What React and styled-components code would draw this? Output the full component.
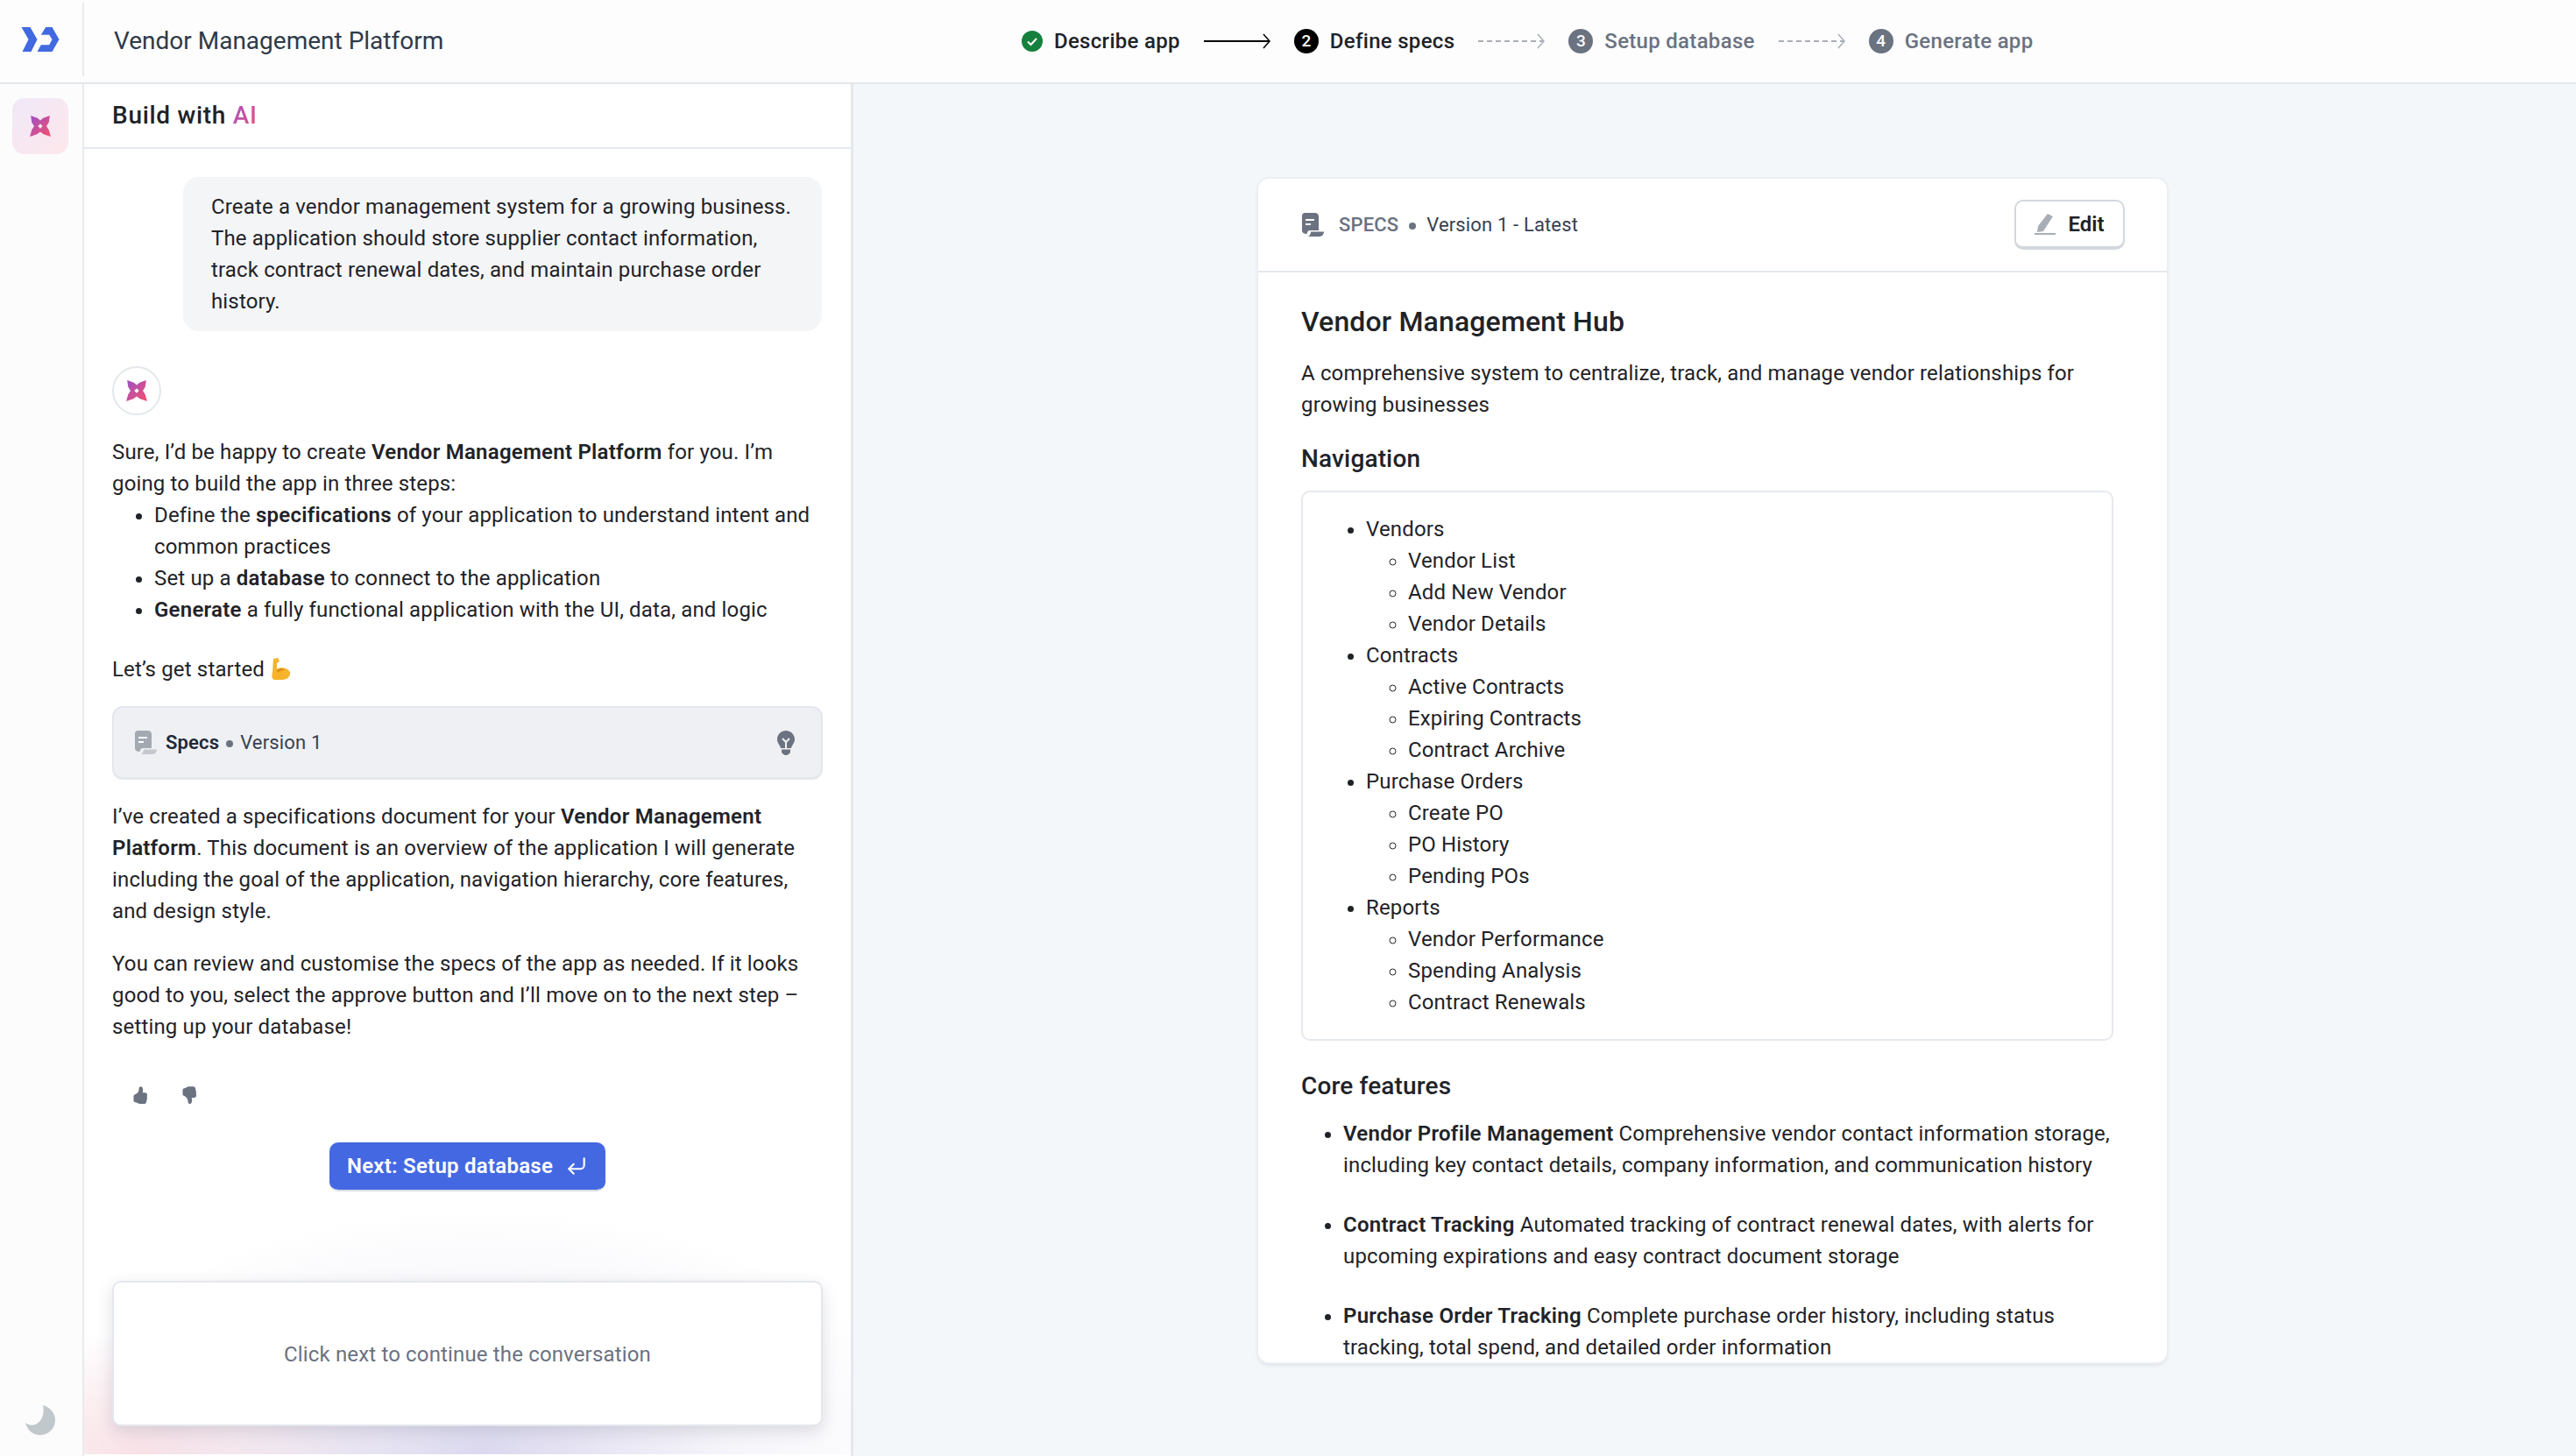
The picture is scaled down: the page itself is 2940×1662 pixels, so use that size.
import React from 'react';
import styled, { createGlobalStyle } from 'styled-components';
import { CornerDownLeft } from 'lucide-react';
import { BsHandThumbsUpFill, BsHandThumbsDownFill } from 'react-icons/bs';

const GlobalStyle = createGlobalStyle`
  * { box-sizing: border-box; }
  html, body { margin: 0; padding: 0; background: #fff; }
  body {
    font-family: Roboto, "Liberation Sans", sans-serif;
    font-size: 24px;
    line-height: 36px;
    letter-spacing: 0.15px;
    color: #1f2328;
  }
`;

const Page = styled.div`
  display: flex;
  flex-direction: column;
  width: 2940px;
  height: 1662px;
  overflow: hidden;
`;

const TopBar = styled.header`
  display: flex;
  align-items: center;
  flex: none;
  height: 96px;
  background: #fdfdfe;
  border-bottom: 2px solid #e4e8ec;
`;

const LogoCell = styled.div`
  display: flex;
  align-items: center;
  justify-content: center;
  width: 96px;
  height: 84px;
  padding-right: 2px;
  margin-bottom: 4px;
  border-right: 2px solid #e8ebee;
`;

const AppTitle = styled.div`
  width: 1070px;
  padding-left: 34px;
  font-size: 28px;
  letter-spacing: 0;
  color: #2f3a48;
`;

const Stepper = styled.nav`
  display: flex;
  align-items: center;
`;

const Step = styled.div`
  display: flex;
  align-items: center;
  gap: 13px;
  font-size: 24px;
  font-weight: 500;
  letter-spacing: 0.3px;
  color: ${(p) => (p.$muted ? '#6b7280' : '#1f2328')};
`;

const StepNumber = styled.span`
  display: flex;
  align-items: center;
  justify-content: center;
  width: 28px;
  height: 28px;
  border-radius: 50%;
  font-size: 19px;
  font-weight: 500;
  letter-spacing: 0;
  color: #fff;
  background: ${(p) => (p.$muted ? '#6b7280' : '#000')};
`;

const StepArrow = styled.svg`
  display: block;
  width: 76px;
  height: 20px;
  margin: 0 27px;
  flex: none;
`;

const Body = styled.div`
  display: flex;
  flex: 1;
  min-height: 0;
`;

const SideRail = styled.aside`
  display: flex;
  flex-direction: column;
  align-items: center;
  justify-content: space-between;
  flex: none;
  width: 96px;
  padding: 16px 2px 24px 0;
  background: #fcfcfc;
  border-right: 2px solid #e8ebee;
`;

const RailButton = styled.div`
  display: flex;
  align-items: center;
  justify-content: center;
  width: 64px;
  height: 64px;
  border-radius: 14px;
  background: linear-gradient(135deg, #f0e8f8, #fee7ec);
`;

const ChatPanel = styled.section`
  display: flex;
  flex-direction: column;
  flex: none;
  width: 878px;
  background: #fff;
  border-right: 3px solid #e4e8ec;
`;

const ChatHeader = styled.div`
  display: flex;
  align-items: center;
  flex: none;
  height: 74px;
  padding-left: 32px;
  font-size: 28px;
  font-weight: 500;
  letter-spacing: 0.7px;
  color: #1f2328;
  border-bottom: 2px solid #e4e8ec;
`;

const GradientText = styled.span`
  background: linear-gradient(120deg, #a550c4, #f0527a);
  -webkit-background-clip: text;
  background-clip: text;
  color: transparent;
`;

const ChatScroll = styled.div`
  flex: 1;
  min-height: 0;
  padding: 32px 32px 0;
`;

const UserBubble = styled.div`
  width: 729px;
  margin-left: 81px;
  padding: 16px 32px;
  border-radius: 18px;
  background: #f4f5f7;
`;

const Avatar = styled.div`
  display: flex;
  align-items: center;
  justify-content: center;
  width: 56px;
  height: 56px;
  margin: 40px 0 24px;
  border-radius: 50%;
  background: #fff;
  border: 2px solid #e4e8ec;
`;

const Para = styled.p`
  margin: 0 0 ${(p) => p.$after ?? 24}px;
`;

const BulletList = styled.ul`
  margin: 0 0 32px;
  padding: 0 0 0 48px;
`;

const SpecsChip = styled.div`
  display: flex;
  align-items: center;
  justify-content: space-between;
  height: 84px;
  margin-bottom: 24px;
  padding: 0 30px 0 24px;
  border: 2px solid #e4e7ec;
  border-bottom-width: 3px;
  border-radius: 12px;
  background: #eff0f3;
`;

const ChipLabel = styled.div`
  display: flex;
  align-items: center;
  gap: 9px;
  font-size: 22px;
  color: #374151;

  strong {
    font-weight: 600;
    color: #1f2937;
  }
`;

const Dot = styled.span`
  display: inline-block;
  width: 8px;
  height: 8px;
  margin: 0 ${(p) => p.$space || 8}px;
  vertical-align: middle;
  border-radius: 50%;
  background: #6b7280;
`;

const Feedback = styled.div`
  display: flex;
  gap: 36px;
  margin: 50px 0 44px 22px;
  color: #6b7280;
  font-size: 20px;
  height: 20px;
`;

const NextRow = styled.div`
  display: flex;
  justify-content: center;
`;

const NextButton = styled.button`
  display: flex;
  align-items: center;
  gap: 14px;
  height: 56px;
  padding: 0 20px;
  border: 0;
  border-bottom: 2px solid #d9dce3;
  border-radius: 10px;
  background: #4468e2;
  background-clip: padding-box;
  color: #fff;
  font: 600 24px/1 Roboto, sans-serif;
  letter-spacing: 0.25px;
`;

const ChatFooter = styled.div`
  flex: none;
  margin-bottom: 2px;
  padding: 82px 32px 32px;
  background:
    radial-gradient(ellipse 58% 100% at 52% 100%, rgba(190, 185, 225, 0.55), rgba(215, 212, 235, 0.24) 55%, rgba(255, 255, 255, 0) 100%),
    radial-gradient(ellipse 34% 50% at 8% 100%, rgba(250, 215, 220, 0.7), rgba(255, 255, 255, 0) 100%);
`;

const ContinueCard = styled.div`
  display: flex;
  align-items: center;
  justify-content: center;
  height: 166px;
  padding-top: 2px;
  border: 2px solid #e4e7ec;
  border-radius: 10px;
  background: #fff;
  color: #6b7280;
  box-shadow: 0 6px 18px rgba(60, 60, 90, 0.16);
`;

const Stage = styled.main`
  flex: 1;
  min-width: 0;
  padding: 108px 0 107px 462px;
  background: #f4f7fa;
`;

const SpecCard = styled.article`
  display: flex;
  flex-direction: column;
  width: 1037px;
  height: 100%;
  overflow: hidden;
  border-radius: 12px;
  background: #fff;
  box-shadow: 0 0 0 2px #eceff2, 0 3px 4px rgba(60, 70, 90, 0.16);
`;

const SpecHeader = styled.div`
  display: flex;
  align-items: center;
  justify-content: space-between;
  flex: none;
  height: 107px;
  padding: 0 48px 0 50px;
  border-bottom: 2px solid #e4e8ec;
`;

const SpecMeta = styled.div`
  display: flex;
  align-items: center;
  gap: 16px;
  font-size: 22px;
  color: #374151;
`;

const SpecLabel = styled.span`
  color: #6b7280;
  font-weight: 500;
`;

const EditButton = styled.button`
  display: flex;
  align-items: center;
  justify-content: center;
  gap: 14px;
  width: 126px;
  height: 57px;
  border: 2px solid #d3d8de;
  border-bottom-width: 4px;
  border-radius: 10px;
  background: #fff;
  color: #1f2328;
  font: 600 24px/1 Roboto, sans-serif;
`;

const SpecBody = styled.div`
  flex: 1;
  min-height: 0;
  padding: 36px 60px 0 49px;
`;

const SpecTitle = styled.h1`
  margin: 0 0 21px;
  font-size: 32px;
  line-height: 40px;
  font-weight: 500;
`;

const SectionTitle = styled.h2`
  margin: ${(p) => p.$top}px 0 18px;
  font-size: 28px;
  line-height: 36px;
  font-weight: 500;
`;

const NavBox = styled.div`
  width: 927px;
  padding: 24px 24px 24px;
  border: 2px solid #e6e9ed;
  border-radius: 10px;
`;

const NavList = styled.ul`
  margin: 0;
  padding: 0 0 0 48px;
  list-style: disc;
`;

const NavSubList = styled.ul`
  margin: 0;
  padding: 0 0 0 48px;
  list-style: circle;
`;

const FeatureList = styled.ul`
  margin: 0;
  padding: 0 0 0 48px;

  li { margin-bottom: 32px; }
`;

const Bold = styled.strong`
  font-weight: 600;
  letter-spacing: 0.25px;
`;

const Logo = () => (
  <svg width="44" height="28" viewBox="0 0 43 28" fill="#4169e1">
    <path d="M0 0H10L18 14L11 28H1L8 14Z" />
    <path d="M27.7 0H35L43 14L35 28H18L22.3 20.3H31.7L35 14L31.7 8.7H22.3Z" />
  </svg>
);

const Spark = ({ id }) => (
  <svg width="26" height="26" viewBox="0 0 24 24">
    <defs>
      <linearGradient id={id} x1="0" y1="0" x2="1" y2="1">
        <stop offset="0" stopColor="#9a50c8" />
        <stop offset="1" stopColor="#f8506a" />
      </linearGradient>
    </defs>
    <path
      fill={`url(#${id})`}
      fillRule="evenodd"
      d="M2 1L9 3.500L12 6L15 3.500L22 1L21 8L18.500 12L21 16L23 23L15.500 20.500L12 18L8.500 20.500L1 23L3 16L5.500 12L3 8ZM12 9.500L9.500 12L12 14.500L14.500 12Z"
    />
  </svg>
);

const DocIcon = ({ color = '#a3a9b1', curl = '#c4c8ce' }) => (
  <svg width="26" height="28" viewBox="0 0 26 28">
    <path fill={color} d="M3 0H15C17 0 19 1.500 19 4V20H9C7 20 6 21.500 5.500 24C3 24 0 23 0 20V3C0 1.500 1.500 0 3 0Z" />
    <path fill="#fff" d="M4 7H14V9H4ZM4 12H10V14H4Z" />
    <path fill={curl} d="M10 21.500H25C25 24 23 27 20 27H7C9 26 10 24 10 21.500Z" />
  </svg>
);

const Bulb = () => (
  <svg width="20" height="28" viewBox="0 0 20 28">
    <path fill="#6b7280" d="M10 0C15 0 20 4 20 10C20 14 17 16 16 20H4C3 16 0 14 0 10C0 4 5 0 10 0Z" />
    <path fill="none" stroke="#eff0f3" strokeWidth="2" d="M6 9L10 13L14 9M10 13V20" />
    <path fill="#6b7280" d="M5 21.500H15V24C15 26 12 28 10 28C8 28 5 26 5 24Z" />
  </svg>
);

const Moon = () => (
  <svg width="34" height="34" viewBox="0 0 34 34">
    <path fill="#c0c8cc" d="M20 0C28 2 34 9 34 17C34 27 26 34 17 34C8 34 2 28 0 20C2 22 6 23 9 22.500C16 22 23 12 20 0Z" />
  </svg>
);

const Pencil = () => (
  <svg width="24" height="26" viewBox="0 0 24 26">
    <path fill="#a9aeb6" d="M15 1L21 4L10 21L3 22L4 15Z" />
    <path fill="#a9aeb6" d="M0 23H24V25H0Z" />
  </svg>
);

const Arm = () => (
  <svg width="24" height="26" viewBox="0 0 24 26" style={{ verticalAlign: -5 }}>
    <path fill="#f7b32b" d="M4 1L9 0L11 4L8 6L8 13C13 10 20 11 23 16C24 22 19 25 13 25L5 25C2 24 2 20 3 16Z" />
    <path fill="#d98f1c" d="M8 13C12 11 15 12 17 14C14 14 11 15 9 17Z" />
  </svg>
);

const DoneCheck = () => (
  <svg width="24" height="24" viewBox="0 0 24 24">
    <circle cx="12" cy="12" r="12" fill="#15803d" />
    <path d="M7 12.500L10.500 16L17 9" fill="none" stroke="#fff" strokeWidth="2" />
  </svg>
);

const FlowArrow = ({ dashed }) => (
  <StepArrow viewBox="0 0 76 20">
    <path
      d="M0 10H74"
      fill="none"
      stroke={dashed ? '#a9aeb6' : '#000'}
      strokeWidth="2"
      strokeDasharray={dashed ? '6 4' : undefined}
    />
    <path d="M68 2L75 10L68 18" fill="none" stroke={dashed ? '#a9aeb6' : '#000'} strokeWidth="1.500" />
  </StepArrow>
);

const navGroups = [
  ['Vendors', ['Vendor List', 'Add New Vendor', 'Vendor Details']],
  ['Contracts', ['Active Contracts', 'Expiring Contracts', 'Contract Archive']],
  ['Purchase Orders', ['Create PO', 'PO History', 'Pending POs']],
  ['Reports', ['Vendor Performance', 'Spending Analysis', 'Contract Renewals']],
];

const features = [
  ['Vendor Profile Management', 'Comprehensive vendor contact information storage, including key contact details, company information, and communication history'],
  ['Contract Tracking', 'Automated tracking of contract renewal dates, with alerts for upcoming expirations and easy contract document storage'],
  ['Purchase Order Tracking', 'Complete purchase order history, including status tracking, total spend, and detailed order information'],
];

const App = () => (
  <Page>
    <GlobalStyle />
    <TopBar>
      <LogoCell><Logo /></LogoCell>
      <AppTitle>Vendor Management Platform</AppTitle>
      <Stepper>
        <Step><DoneCheck />Describe app</Step>
        <FlowArrow />
        <Step><StepNumber>2</StepNumber>Define specs</Step>
        <FlowArrow dashed />
        <Step $muted><StepNumber $muted>3</StepNumber>Setup database</Step>
        <FlowArrow dashed />
        <Step $muted><StepNumber $muted>4</StepNumber>Generate app</Step>
      </Stepper>
    </TopBar>
    <Body>
      <SideRail>
        <RailButton><Spark id="spark-rail" /></RailButton>
        <Moon />
      </SideRail>
      <ChatPanel>
        <ChatHeader>Build with&nbsp;<GradientText>AI</GradientText></ChatHeader>
        <ChatScroll>
          <UserBubble>
            Create a vendor management system for a growing business. The application should store supplier contact information, track contract renewal dates, and maintain purchase order history.
          </UserBubble>
          <Avatar><Spark id="spark-avatar" /></Avatar>
          <Para $after={0}>
            Sure, I’d be happy to create <Bold>Vendor Management Platform</Bold> for you. I’m going to build the app in three steps:
          </Para>
          <BulletList>
            <li>Define the <Bold>specifications</Bold> of your application to understand intent and common practices</li>
            <li>Set up a <Bold>database</Bold> to connect to the application</li>
            <li><Bold>Generate</Bold> a fully functional application with the UI, data, and logic</li>
          </BulletList>
          <Para>Let’s get started <Arm /></Para>
          <SpecsChip>
            <ChipLabel>
              <DocIcon />
              <span><strong>Specs</strong><Dot />Version 1</span>
            </ChipLabel>
            <Bulb />
          </SpecsChip>
          <Para>
            I’ve created a specifications document for your <Bold>Vendor Management Platform</Bold>. This document is an overview of the application I will generate including the goal of the application, navigation hierarchy, core features, and design style.
          </Para>
          <Para $after={0}>
            You can review and customise the specs of the app as needed. If it looks good to you, select the approve button and I’ll move on to the next step – setting up your database!
          </Para>
          <Feedback>
            <BsHandThumbsUpFill />
            <BsHandThumbsDownFill />
          </Feedback>
          <NextRow>
            <NextButton>Next: Setup database <CornerDownLeft size={26} strokeWidth={2} /></NextButton>
          </NextRow>
        </ChatScroll>
        <ChatFooter>
          <ContinueCard>Click next to continue the conversation</ContinueCard>
        </ChatFooter>
      </ChatPanel>
      <Stage>
        <SpecCard>
          <SpecHeader>
            <SpecMeta>
              <DocIcon color="#6b7280" curl="#6b7280" />
              <span><SpecLabel>SPECS</SpecLabel><Dot $space={12} />Version 1 - Latest</span>
            </SpecMeta>
            <EditButton><Pencil />Edit</EditButton>
          </SpecHeader>
          <SpecBody>
            <SpecTitle>Vendor Management Hub</SpecTitle>
            <Para $after={0}>
              A comprehensive system to centralize, track, and manage vendor relationships for growing businesses
            </Para>
            <SectionTitle $top={26}>Navigation</SectionTitle>
            <NavBox>
              <NavList>
                {navGroups.map(([name, items]) => (
                  <li key={name}>
                    {name}
                    <NavSubList>
                      {items.map((item) => <li key={item}>{item}</li>)}
                    </NavSubList>
                  </li>
                ))}
              </NavList>
            </NavBox>
            <SectionTitle $top={34}>Core features</SectionTitle>
            <FeatureList>
              {features.map(([name, text]) => (
                <li key={name}><Bold>{name}</Bold> {text}</li>
              ))}
            </FeatureList>
          </SpecBody>
        </SpecCard>
      </Stage>
    </Body>
  </Page>
);

export default App;
